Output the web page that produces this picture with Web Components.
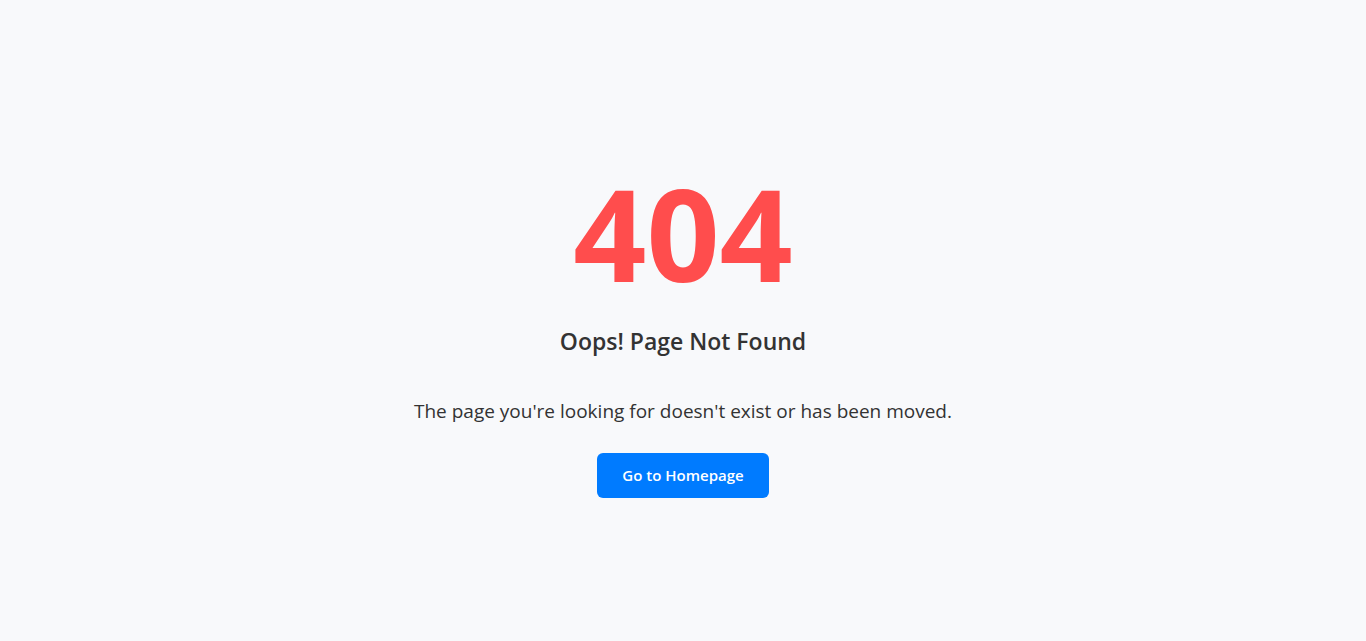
<!DOCTYPE html>
<html lang="en">
<head>
<meta charset="UTF-8">
<meta name="viewport" content="width=device-width, initial-scale=1.0">
<title>404 - Page Not Found</title>
<style>
  body {
    margin: 0;
    background-color: #f8f9fb;
    color: #333;
    font-family: "Segoe UI", "Open Sans", "Noto Sans", sans-serif;
  }
</style>
</head>
<body>
<not-found-page>
  <span slot="code">404</span>
  <span slot="title">Oops! Page Not Found</span>
  <span slot="message">The page you're looking for doesn't exist or has been moved.</span>
  <home-link slot="action" href="/">Go to Homepage</home-link>
</not-found-page>

<script>
const templateHomeLink = document.createElement("template");

templateHomeLink.innerHTML = `
    <style>
      :host {
        display: inline-block;
      }

      a {
        display: block;
        padding: 12px 25px;
        border-radius: 6px;
        background-color: #007bff;
        color: #fff;
        font-size: 15px;
        font-weight: 600;
        line-height: 21px;
        text-decoration: none;
      }

      a:hover {
        background-color: #0056b3;
      }
    </style>
    <a><slot></slot></a>
`;

class HomeLink extends HTMLElement {
  constructor() {
    super();
    this.attachShadow({ mode: "open" });
    this.shadowRoot.appendChild(templateHomeLink.content.cloneNode(true));
  }

  connectedCallback() {
    this.shadowRoot.querySelector("a").href = this.getAttribute("href") || "/";
  }
}

window.customElements.define("home-link", HomeLink);

const templateNotFound = document.createElement("template");

templateNotFound.innerHTML = `
    <style>
      :host {
        display: block;
      }

      main {
        display: flex;
        flex-direction: column;
        align-items: center;
        justify-content: center;
        min-height: 100vh;
        text-align: center;
      }

      h1 {
        margin: 0;
        color: #ff4d4d;
        font-size: 128px;
        font-weight: 700;
        line-height: 180px;
      }

      h2 {
        margin: 0 0 38px;
        font-size: 23px;
        font-weight: 600;
        line-height: 36px;
      }

      p {
        margin: 0 0 28px;
        font-size: 19px;
        line-height: 28px;
      }
    </style>
    <main>
      <h1><slot name="code"></slot></h1>
      <h2><slot name="title"></slot></h2>
      <p><slot name="message"></slot></p>
      <slot name="action"></slot>
    </main>
`;

class NotFoundPage extends HTMLElement {
  constructor() {
    super();
    this.attachShadow({ mode: "open" });
    this.shadowRoot.appendChild(templateNotFound.content.cloneNode(true));
  }
}

window.customElements.define("not-found-page", NotFoundPage);
</script>
</body>
</html>
